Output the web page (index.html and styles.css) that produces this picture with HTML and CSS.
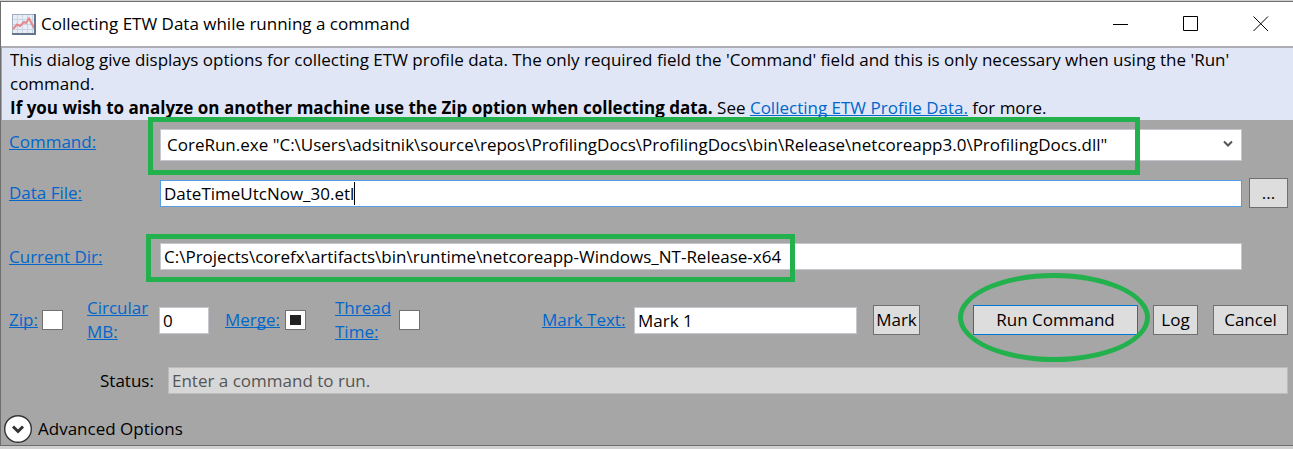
FILE: index.html
```
<!DOCTYPE html>
<html lang="en">
<head>
<meta charset="utf-8">
<title>Collecting ETW Data while running a command</title>
<link rel="stylesheet" href="styles.css">
</head>
<body>
<div class="window">
  <header class="titlebar">
    <svg class="app-icon" width="24" height="21" viewBox="0 0 24 21" aria-hidden="true">
      <rect width="24" height="21" fill="#a3aec2"/>
      <rect x="1" y="1" width="21" height="18" fill="#e9eef6"/>
      <path d="M1 5.500H22M1 10.500H22M1 15.500H22M5.500 1V19M10.500 1V19M15.500 1V19M20.500 1V19" stroke="#c9d4e6" fill="none"/>
      <path d="M1 15L5 10.500L8 12L12 8L14 9L17 4.500L22 14" stroke="#e58a8c" stroke-width="2" fill="none"/>
      <path d="M0 20H24M23 0V21" stroke="#66748c" stroke-width="2"/>
    </svg>
    <h1 class="title">Collecting ETW Data while running a command</h1>
    <div class="caption-buttons">
      <button class="caption" aria-label="Minimize"><svg width="16" height="16" viewBox="0 0 16 16"><path d="M0 8.500H15" stroke="#000"/></svg></button>
      <button class="caption" aria-label="Maximize"><svg width="16" height="16" viewBox="0 0 16 16"><path d="M.5 .5H14.500V14.500H.5Z" stroke="#000" fill="none"/></svg></button>
      <button class="caption close" aria-label="Close"><svg width="16" height="16" viewBox="0 0 16 16"><path d="M.5 .5L15 15M15 .5L.5 15" stroke="#000"/></svg></button>
    </div>
  </header>

  <section class="banner">
    <p>This dialog give displays options for collecting ETW profile data. The only required field the 'Command' field and this is only necessary when using the 'Run' command.</p>
    <p><strong>If you wish to analyze on another machine use the Zip option when collecting data.</strong> See <a href="#profile-data">Collecting ETW Profile Data.</a> for more.</p>
  </section>

  <form class="form">
    <div class="field command-field">
      <label for="command"><a href="#command-help">Command:</a></label>
      <div class="combo">
        <select id="command" class="box combo-box">
          <option>CoreRun.exe "C:\Users\adsitnik\source\repos\ProfilingDocs\ProfilingDocs\bin\Release\netcoreapp3.0\ProfilingDocs.dll"</option>
        </select>
        <svg class="combo-arrow" width="10" height="8" viewBox="0 0 10 8" aria-hidden="true"><path d="M1 1.500L5 5.500L9 1.500" stroke="#555" stroke-width="2" fill="none"/></svg>
      </div>
    </div>
    <div class="field data-field">
      <label for="data-file"><a href="#data-help">Data File:</a></label>
      <div class="edit">
        <input id="data-file" class="box active" type="text" value="DateTimeUtcNow_30.etl">
        <span class="caret"></span>
      </div>
      <button class="button browse" type="button">...</button>
    </div>
    <div class="field dir-field">
      <label for="current-dir"><a href="#dir-help">Current Dir:</a></label>
      <input id="current-dir" class="box" type="text" value="C:\Projects\corefx\artifacts\bin\runtime\netcoreapp-Windows_NT-Release-x64">
    </div>

    <div class="controls">
      <div class="group zip">
        <label for="zip"><a href="#zip-help">Zip:</a></label>
        <input id="zip" class="check" type="checkbox">
      </div>
      <div class="group circular">
        <label for="circular"><a href="#circular-help">Circular MB:</a></label>
        <input id="circular" class="box" type="text" value="0">
      </div>
      <div class="group merge">
        <label for="merge"><a href="#merge-help">Merge:</a></label>
        <input id="merge" class="check" type="checkbox" checked>
      </div>
      <div class="group thread">
        <label for="thread"><a href="#thread-help">Thread Time:</a></label>
        <input id="thread" class="check" type="checkbox">
      </div>
      <div class="group mark">
        <label for="mark-text"><a href="#mark-help">Mark Text:</a></label>
        <input id="mark-text" class="box" type="text" value="Mark 1">
        <button class="button mark-button" type="button">Mark</button>
      </div>
      <div class="group actions">
        <div class="run-wrap">
          <button class="button run" type="button">Run Command</button>
          <div class="highlight ring"></div>
        </div>
        <button class="button log" type="button">Log</button>
        <button class="button cancel" type="button">Cancel</button>
      </div>
    </div>

    <div class="status">
      <label for="status">Status:</label>
      <input id="status" class="box readonly" type="text" value="Enter a command to run." readonly>
    </div>

    <button class="expander" type="button" aria-expanded="false">
      <svg width="28" height="28" viewBox="0 0 28 28" aria-hidden="true"><circle cx="14" cy="14" r="13.300" fill="#fff" stroke="#333" stroke-width="1.400"/><path d="M9 11.500L14 16.500L19 11.500" stroke="#333" stroke-width="3" fill="none"/></svg>
      Advanced Options
    </button>
  </form>
  <div class="highlight command-mark"></div>
  <div class="highlight dir-mark"></div>
</div>
</body>
</html>
```
FILE: styles.css
```
* {
  box-sizing: border-box;
}

body {
  margin: 0;
  padding: 1px 0 2px;
  background: #d0d0d0;
  color: #000;
  font: 17px/24px "Open Sans", "Noto Sans", sans-serif;
}

input, select, button {
  font: inherit;
  color: inherit;
  margin: 0;
}

a {
  color: #0066cc;
  text-decoration: underline;
  text-decoration-thickness: 1px;
  text-underline-offset: 1px;
  text-decoration-skip-ink: none;
}

.window {
  position: relative;
  background: #a6a6a6;
  border: 1px solid #6e6e6e;
  border-right: 0;
}

.titlebar {
  display: flex;
  align-items: center;
  height: 44px;
  padding-left: 11px;
  background: #fff;
}

.title {
  flex: 1;
  margin: 0 0 0 5px;
  font-size: 17px;
  font-weight: 400;
}

.caption-buttons {
  display: flex;
}

.caption {
  display: flex;
  align-items: center;
  justify-content: center;
  width: 70px;
  height: 44px;
  padding: 0;
  border: 0;
  background: none;
}

.close {
  width: 67px;
  padding-left: 2px;
}

.banner {
  margin-left: 1px;
  padding: 0 9px 0 8px;
  background: #e1e6f7;
  border-top: 2px solid #abadb3;
}

.banner p {
  margin: 0;
}

.form {
  padding: 9px 5px 2px 8px;
}

.field {
  display: grid;
  grid-template-columns: 151px 1fr 39px;
  column-gap: 7px;
  align-items: center;
}

.field label {
  width: 151px;
}

.field > :nth-child(2) {
  margin-left: -7px;
}

.box {
  width: 100%;
  min-width: 0;
  height: 27px;
  padding: 0 3px;
  border: 1px solid #c4c7cd;
  border-radius: 0;
  outline: 0;
  background: #fff;
}

.combo, .edit {
  position: relative;
}

.combo-box {
  display: block;
  height: 32px;
  padding: 0 28px 0 6px;
  appearance: none;
}

.combo-arrow {
  position: absolute;
  right: 9px;
  top: 11px;
}

.command-field label {
  padding-bottom: 6px;
}

.active {
  display: block;
  border-color: #569de5;
}

.caret {
  position: absolute;
  left: 194px;
  top: 2px;
  width: 1px;
  height: 23px;
  background: #000;
}

.data-field {
  margin-top: 17px;
}

.dir-field {
  margin-top: 35px;
}

.dir-field .box {
  width: calc(100% + 7px);
}

.button {
  height: 30px;
  padding: 0;
  border: 1px solid #707070;
  border-radius: 0;
  background: #ddd;
  line-height: 28px;
}

.controls {
  display: flex;
  align-items: center;
  margin-top: 26px;
}

.group {
  display: flex;
  align-items: center;
  flex: none;
}

.check {
  width: 21px;
  height: 20px;
  appearance: none;
  border: 1px solid #707070;
  border-radius: 0;
  background: #fff;
}

.check:checked {
  padding: 4px;
  background: #212121 content-box;
  box-shadow: inset 0 0 0 4px #fff;
}

.zip label {
  width: 33px;
}

.circular {
  margin-left: 24px;
}

.circular label {
  width: 72px;
}

.circular .box {
  width: 50px;
}

.merge {
  margin-left: 16px;
}

.merge label {
  width: 60px;
}

.thread {
  margin-left: 29px;
}

.thread label {
  width: 64px;
}

.mark {
  flex: 1;
  margin-left: 122px;
}

.mark label {
  flex: none;
  width: 92px;
}

.mark-button {
  flex: none;
  width: 47px;
  margin-left: 16px;
}

.actions {
  gap: 15px;
  margin-left: 53px;
}

.run-wrap {
  position: relative;
}

.run {
  display: block;
  width: 165px;
  border-color: #0078d7;
}

.log {
  width: 45px;
}

.cancel {
  width: 75px;
}

.status {
  display: flex;
  align-items: center;
  margin-top: 23px;
  padding-left: 91px;
}

.status label {
  flex: none;
  width: 68px;
}

.readonly {
  color: #555;
  background: #d7d7d7;
  border-color: #bcbcbc;
}

.expander {
  display: flex;
  align-items: center;
  gap: 6px;
  margin: 21px 0 0 -5px;
  padding: 0;
  border: 0;
  background: none;
}

.highlight {
  position: absolute;
  border: 5px solid #22b14c;
  pointer-events: none;
}

.command-mark {
  left: 147px;
  top: 115px;
  width: 992px;
  height: 58px;
}

.dir-mark {
  left: 145px;
  top: 232px;
  width: 649px;
  height: 48px;
}

.ring {
  left: -15px;
  top: -32px;
  width: 192px;
  height: 89px;
  border-radius: 50%;
}
```
